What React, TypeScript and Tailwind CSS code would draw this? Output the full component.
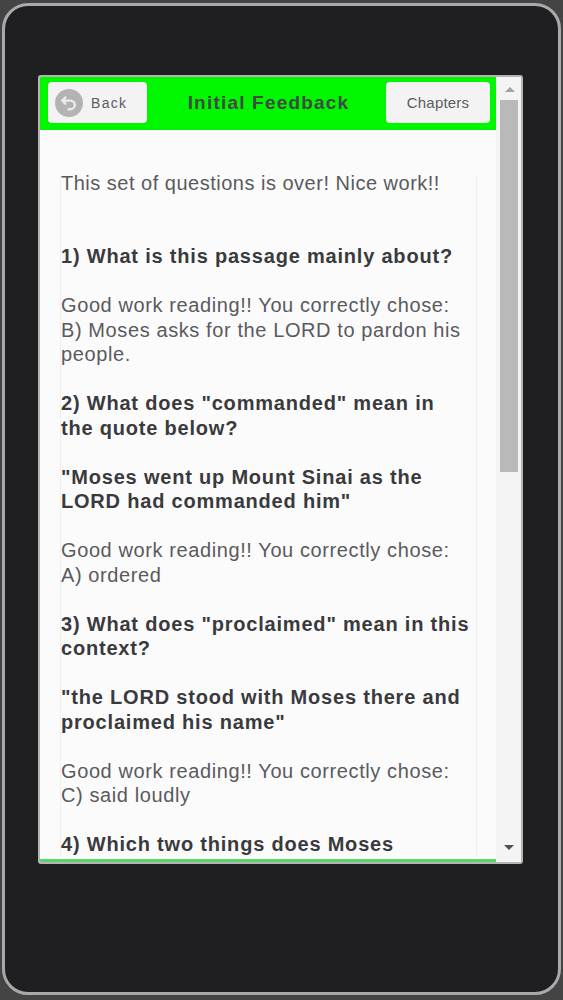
const sans = "font-['Liberation_Sans',Arial,sans-serif]";

function BackIcon() {
  return (
    <svg width="28" height="28" viewBox="0 0 29 29" className="shrink-0">
      <circle cx="14.5" cy="14.5" r="14.5" fill="#b3b3b3" />
      <path
        d="M11.5 8 L7.5 12 L11.5 16 M8 12 H15.5 C18.5 12 20.5 14 20.5 16.5 C20.5 19 18.5 21 15.5 21 H13"
        fill="none"
        stroke="#ececec"
        strokeWidth="2.4"
      />
    </svg>
  );
}

function Question({ lines }: { lines: string[] }) {
  return (
    <p className="font-bold tracking-[0.8px] text-[#3a3a3c]">
      {lines.map((line) => (
        <span key={line} className="block">
          {line}
        </span>
      ))}
    </p>
  );
}

function Answer({ lines }: { lines: string[] }) {
  return (
    <p className="tracking-[0.6px] text-[#5a5a5c]">
      {lines.map((line) => (
        <span key={line} className="block">
          {line}
        </span>
      ))}
    </p>
  );
}

function Scrollbar() {
  return (
    <div className="flex w-[25px] shrink-0 flex-col bg-[#f4f4f5]">
      <div className="flex h-[23px] items-center justify-center pl-[2px] pt-[2px]">
        <div className="h-0 w-0 border-x-[5px] border-b-[5px] border-x-transparent border-b-[#a3a3a3]" />
      </div>
      <div className="ml-[4px] mr-[3px] h-[372px] bg-[#b9b9b9]" />
      <div className="flex-1" />
      <div className="flex h-[24px] items-center justify-center pb-[6px]">
        <div className="h-0 w-0 border-x-[5px] border-t-[5px] border-x-transparent border-t-[#505050]" />
      </div>
    </div>
  );
}

export default function App() {
  return (
    <div className={`h-[1000px] w-[563px] overflow-hidden bg-[#444444] pb-[5px] pl-[2px] pr-[2px] pt-[3px] ${sans}`}>
      <div className="h-[992px] rounded-[26px] border-[3px] border-[#a9a9ab] bg-[#1f1e20] px-[33px] pt-[69px]">
        <div className="flex h-[789px] w-[485px] overflow-hidden rounded-[3px] border-[2px] border-[#b4b4b4] bg-[#fbfbfc]">
          <div className="flex min-w-0 flex-1 flex-col border-b-[3px] border-[#58d668]">
            <header className="flex h-[53px] shrink-0 items-center justify-between bg-[#00f700] pb-[2px] pl-[8px] pr-[6px]">
              <button className="flex h-[41px] w-[99px] items-center gap-[8px] rounded-[4px] bg-[#f3f3f3] pl-[7px] pt-[1px] text-[14px] tracking-[1.3px] text-[#5c5c60]">
                <BackIcon />
                Back
              </button>
              <h1 className="pl-[4px] pt-[2px] text-[19px] font-bold tracking-[1.2px] text-[#3f4a42]">Initial Feedback</h1>
              <button className="h-[41px] w-[104px] rounded-[4px] bg-[#f3f3f3] pt-[1px] text-[15px] tracking-[0.2px] text-[#5c5c60]">
                Chapters
              </button>
            </header>
            <main className="min-h-0 flex-1 overflow-hidden px-[20px] pt-[41px] text-[20px] leading-[24.5px]">
              <p className="pl-[1px] tracking-[0.5px] text-[#5a5a5c]">This set of questions is over! Nice work!!</p>
              <div className="mr-[-1px] mt-[-20px] flex flex-col gap-[24.5px] border-x border-[#efeff1] pt-[68.5px]">
                <Question lines={["1) What is this passage mainly about?"]} />
                <Answer
                  lines={[
                    "Good work reading!! You correctly chose:",
                    "B) Moses asks for the LORD to pardon his",
                    "people.",
                  ]}
                />
                <Question lines={['2) What does "commanded" mean in', "the quote below?"]} />
                <Question lines={['"Moses went up Mount Sinai as the', 'LORD had commanded him"']} />
                <Answer lines={["Good work reading!! You correctly chose:", "A) ordered"]} />
                <Question lines={['3) What does "proclaimed" mean in this', "context?"]} />
                <Question lines={['"the LORD stood with Moses there and', 'proclaimed his name"']} />
                <Answer lines={["Good work reading!! You correctly chose:", "C) said loudly"]} />
                <Question lines={["4) Which two things does Moses"]} />
              </div>
            </main>
          </div>
          <Scrollbar />
        </div>
      </div>
    </div>
  );
}
